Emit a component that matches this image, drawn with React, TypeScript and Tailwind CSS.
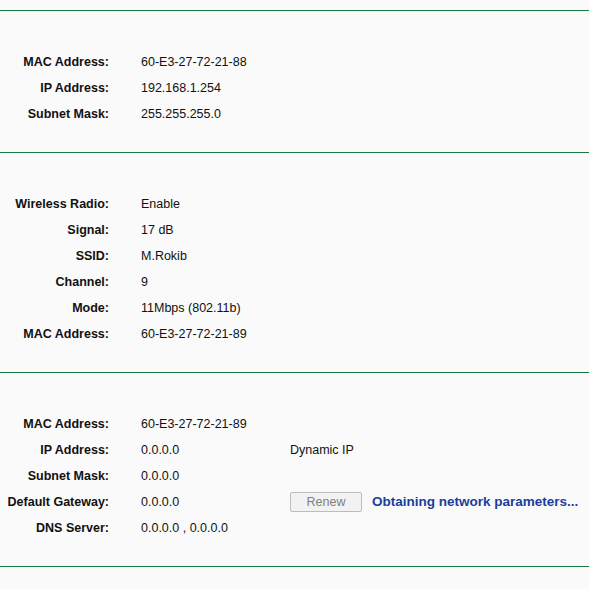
const sections: { label: string; value: string; extra?: "dynamic" | "renew" }[][] = [
  [
    { label: "MAC Address:", value: "60-E3-27-72-21-88" },
    { label: "IP Address:", value: "192.168.1.254" },
    { label: "Subnet Mask:", value: "255.255.255.0" },
  ],
  [
    { label: "Wireless Radio:", value: "Enable" },
    { label: "Signal:", value: "17 dB" },
    { label: "SSID:", value: "M.Rokib" },
    { label: "Channel:", value: "9" },
    { label: "Mode:", value: "11Mbps (802.11b)" },
    { label: "MAC Address:", value: "60-E3-27-72-21-89" },
  ],
  [
    { label: "MAC Address:", value: "60-E3-27-72-21-89" },
    { label: "IP Address:", value: "0.0.0.0", extra: "dynamic" },
    { label: "Subnet Mask:", value: "0.0.0.0" },
    { label: "Default Gateway:", value: "0.0.0.0", extra: "renew" },
    { label: "DNS Server:", value: "0.0.0.0 , 0.0.0.0" },
  ],
];

export default function App() {
  return (
    <div
      className="min-h-screen bg-[#fafafa] pt-[10px] text-[12.5px] text-[#111]"
      style={{ fontFamily: '"Liberation Sans", Arial, sans-serif' }}
    >
      {sections.map((rows, i) => (
        <section key={i} className="border-t border-[#177a42] pt-[38px] pb-[25px]">
          {rows.map((r) => (
            <div key={r.label + r.value} className="flex h-[26px] items-center">
              <div className="w-[109px] shrink-0 text-right font-bold">{r.label}</div>
              <div className="w-[181px] shrink-0 pl-[32px]">{r.value}</div>
              {r.extra === "dynamic" && <div>Dynamic IP</div>}
              {r.extra === "renew" && (
                <div className="flex items-center">
                  <button className="h-[20px] w-[72px] rounded-[2px] border border-[#bcbcbc] bg-[#f2f2f2] text-[12.5px] text-[#808080]">
                    Renew
                  </button>
                  <span className="ml-[10px] text-[13.5px] font-bold text-[#1c3d9c]">
                    Obtaining network parameters...
                  </span>
                </div>
              )}
            </div>
          ))}
        </section>
      ))}
      <div className="border-t border-[#177a42]" />
    </div>
  );
}
